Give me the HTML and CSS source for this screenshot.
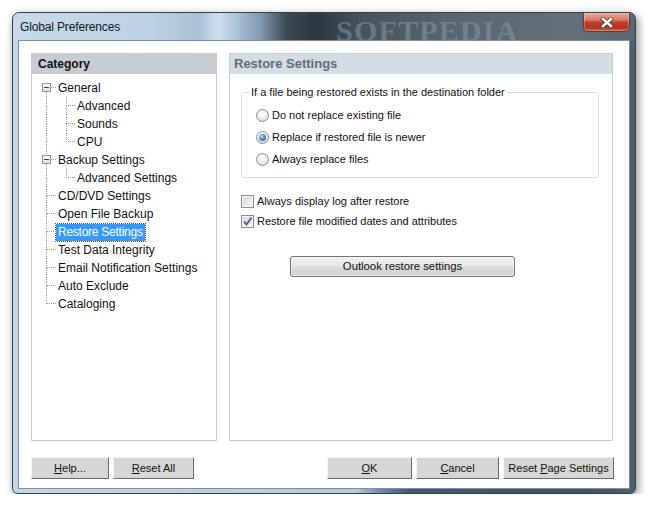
FILE: index.html
```html
<!DOCTYPE html>
<html>
<head>
<meta charset="utf-8">
<title>Global Preferences</title>
<link rel="stylesheet" href="styles.css">
</head>
<body>
<div class="window">
  <div class="titlebar">
    <span class="title">Global Preferences</span>
    <span class="watermark">SOFTPEDIA</span>
    <span class="close">
      <svg width="14" height="11" viewBox="0 0 14 11">
        <path d="M3 2 L11 9 M11 2 L3 9" stroke="#4a4a4a" stroke-width="4.2" stroke-linecap="square"/>
        <path d="M3 2 L11 9 M11 2 L3 9" stroke="#ffffff" stroke-width="2.4" stroke-linecap="square"/>
      </svg>
    </span>
  </div>
  <div class="client">
    <div class="panels">
      <div class="panel cat">
        <div class="cat-head">Category</div>
        <div class="tree">
          <div class="row"><span class="g exp"><i class="t h"></i><i class="b l"></i><b class="box"></b></span><span class="label">General</span></div>
          <div class="row"><span class="g"><i class="t l"></i><i class="b l"></i></span><span class="g c"><i class="t l h"></i><i class="b l"></i></span><span class="label">Advanced</span></div>
          <div class="row"><span class="g"><i class="t l"></i><i class="b l"></i></span><span class="g c"><i class="t l h"></i><i class="b l"></i></span><span class="label">Sounds</span></div>
          <div class="row"><span class="g"><i class="t l"></i><i class="b l"></i></span><span class="g c"><i class="t l h"></i><i class="b"></i></span><span class="label">CPU</span></div>
          <div class="row"><span class="g exp"><i class="t l h"></i><i class="b l"></i><b class="box"></b></span><span class="label">Backup Settings</span></div>
          <div class="row"><span class="g"><i class="t l"></i><i class="b l"></i></span><span class="g c"><i class="t l h"></i><i class="b"></i></span><span class="label">Advanced Settings</span></div>
          <div class="row"><span class="g"><i class="t l h"></i><i class="b l"></i></span><span class="label">CD/DVD Settings</span></div>
          <div class="row"><span class="g"><i class="t l h"></i><i class="b l"></i></span><span class="label">Open File Backup</span></div>
          <div class="row"><span class="g"><i class="t l h"></i><i class="b l"></i></span><span class="label selected">Restore Settings</span></div>
          <div class="row"><span class="g"><i class="t l h"></i><i class="b l"></i></span><span class="label">Test Data Integrity</span></div>
          <div class="row"><span class="g"><i class="t l h"></i><i class="b l"></i></span><span class="label">Email Notification Settings</span></div>
          <div class="row"><span class="g"><i class="t l h"></i><i class="b l"></i></span><span class="label">Auto Exclude</span></div>
          <div class="row"><span class="g"><i class="t l h"></i><i class="b"></i></span><span class="label">Cataloging</span></div>
        </div>
      </div>
      <div class="panel page">
        <div class="page-head">Restore Settings</div>
        <div class="page-body">
          <fieldset class="group">
            <legend>If a file being restored exists in the destination folder</legend>
            <div class="opt"><span class="radio"></span><span>Do not replace existing file</span></div>
            <div class="opt"><span class="radio on"></span><span>Replace if restored file is newer</span></div>
            <div class="opt"><span class="radio"></span><span>Always replace files</span></div>
          </fieldset>
          <div class="checks">
            <div class="chk"><span class="cbox"></span><span>Always display log after restore</span></div>
            <div class="chk"><span class="cbox on"><svg width="11" height="11" viewBox="0 0 11 11"><path d="M2 5.5 L4.5 8.5 L9.5 1.5" fill="none" stroke="#4b5e93" stroke-width="1.8"/></svg></span><span>Restore file modified dates and attributes</span></div>
          </div>
          <div class="outlook">Outlook restore settings</div>
        </div>
      </div>
    </div>
    <div class="buttons">
      <div class="btn-group">
        <span class="btn b-help"><u>H</u>elp...</span>
        <span class="btn b-reset"><u>R</u>eset All</span>
      </div>
      <div class="btn-group">
        <span class="btn b-ok"><u>O</u>K</span>
        <span class="btn b-cancel"><u>C</u>ancel</span>
        <span class="btn b-page">Reset <u>P</u>age Settings</span>
      </div>
    </div>
  </div>
</div>
</body>
</html>
```

FILE: styles.css
```css
html, body {
  margin: 0;
  padding: 0;
  background: #ffffff;
}
body {
  font-family: "Liberation Sans", Arial, sans-serif;
  color: #000;
}
.window {
  margin: 12px 0 0 12px;
  width: 624px;
  height: 482px;
  box-sizing: border-box;
  border: 1px solid #34414b;
  border-radius: 7px 7px 6px 6px;
  padding: 0 5px 4px 5px;
  box-shadow: 2px 3px 10px rgba(0,0,0,0.45);
  background:
    linear-gradient(to right, #c7d9ea 0%, #bed2e5 22%, #a9c1d7 30%, #cfe0ef 33%, #9fb7cd 37%, #7e95aa 40%, #3b4852 44%, #2b3740 49%, #47545e 56%, #5a6771 72%, #636f79 90%, #5a6670 100%) top / 100% 28px no-repeat,
    linear-gradient(to right, #c3d7ea 0%, #b4cbe0 55%, #6f8ba6 59%, #3e5870 64%, #3c5568 92%, #4d5f6c 100%);
}
.titlebar {
  height: 27px;
  display: flex;
  align-items: center;
  position: relative;
}
.title {
  font-size: 12px;
  letter-spacing: -0.15px;
  color: #101820;
  padding-left: 2px;
  margin-top: 1px;
}
.watermark {
  position: absolute;
  left: 318px;
  top: 3px;
  font-family: "Liberation Serif", serif;
  font-weight: bold;
  font-size: 30px;
  letter-spacing: 1.2px;
  color: rgba(140,155,168,0.5);
  line-height: 30px;
}
.close {
  margin-left: auto;
  align-self: flex-start;
  width: 47px;
  height: 19px;
  box-sizing: border-box;
  border: 1px solid #5b3a34;
  border-top: none;
  border-radius: 0 0 5px 5px;
  background: linear-gradient(#e6a899 0%, #d77a66 40%, #c0402a 50%, #b6321e 80%, #d0604a 100%);
  display: flex;
  align-items: center;
  justify-content: center;
  box-shadow: inset 0 0 0 1px rgba(255,255,255,0.25);
}
.client {
  width: 612px;
  height: 449px;
  box-sizing: border-box;
  background: #ffffff;
  border: 1px solid #7d8e9e;
  padding: 12px 15px 0 12px;
}
.panels {
  display: flex;
  gap: 12px;
  height: 388px;
}
.panel {
  box-sizing: border-box;
  border: 1px solid #c6ccd2;
  height: 388px;
}
.cat { width: 186px; }
.page { width: 384px; }
.cat-head {
  height: 20px;
  background: #c8ccd2;
  font-weight: bold;
  font-size: 12px;
  line-height: 21px;
  padding-left: 6px;
  color: #111;
}
.page-head {
  height: 20px;
  background: #d5dde4;
  font-weight: bold;
  font-size: 13px;
  line-height: 20px;
  padding-left: 4px;
  color: #5c6c7c;
}
.tree {
  padding: 5px 0 0 5px;
  font-size: 12px;
}
.row {
  display: flex;
  align-items: center;
  height: 18px;
}
.g {
  width: 19px;
  flex: none;
  height: 18px;
  display: flex;
  flex-direction: column;
  position: relative;
}
.g i {
  display: block;
  height: 9px;
  margin-left: 9px;
  box-sizing: border-box;
}
.g.c i { margin-left: 10px; }
.g i.l { border-left: 1px dotted #9a9a9a; }
.g i.h { border-bottom: 1px dotted #9a9a9a; }
.box {
  position: absolute;
  left: 5px;
  top: 4px;
  width: 9px;
  height: 9px;
  box-sizing: border-box;
  border: 1px solid #979797;
  background: linear-gradient(#ffffff, #dedede);
}
.box::after {
  content: "";
  position: absolute;
  left: 1px;
  top: 3px;
  width: 5px;
  height: 1px;
  background: #3a3a3a;
}
.label {
  padding: 0 2px;
  line-height: 16px;
  white-space: nowrap;
  color: #111;
}
.label.selected {
  background: #3399ff;
  color: #ffffff;
  outline: 1px dotted #6b4a1a;
  line-height: 17px;
  letter-spacing: -0.25px;
}
.page-body {
  padding: 11px 13px 0 11px;
  font-size: 11px;
  color: #111;
}
.group {
  margin: 0;
  padding: 5px 0 7px 14px;
  border: 1px solid #d3dce2;
  border-radius: 3px;
  min-width: 0;
}
.group legend {
  padding: 0 2px;
  margin-left: -7px;
  line-height: 14px;
  font-size: 11px;
}
.opt {
  display: flex;
  align-items: center;
  gap: 3px;
  height: 22px;
}
.radio {
  width: 13px;
  height: 13px;
  box-sizing: border-box;
  border-radius: 50%;
  border: 1px solid #8d8d8d;
  background: radial-gradient(circle at 45% 35%, #ffffff 0%, #f3f3f3 35%, #cfcfcf 100%);
  display: flex;
  align-items: center;
  justify-content: center;
}
.radio.on::after {
  content: "";
  width: 7px;
  height: 7px;
  border-radius: 50%;
  background: radial-gradient(circle at 40% 35%, #b9e0fb 0%, #4a8fd0 45%, #1b4f8c 100%);
}
.checks {
  margin-top: 13px;
}
.chk {
  display: flex;
  align-items: center;
  gap: 3px;
  height: 20px;
}
.cbox {
  width: 13px;
  height: 13px;
  box-sizing: border-box;
  border: 1px solid #8d8d8d;
  box-shadow: inset 0 0 0 1px #f6f6f6;
  background: linear-gradient(135deg, #d6d6d6, #f7f7f7);
  display: flex;
  align-items: center;
  justify-content: center;
}
.outlook {
  margin: 25px 0 0 49px;
  width: 225px;
  height: 21px;
  box-sizing: border-box;
  border: 1px solid #707070;
  border-radius: 3px;
  background: linear-gradient(#f0f0f0 0%, #e8e8e8 48%, #dadada 52%, #d0d0d0 100%);
  box-shadow: inset 0 0 0 1px rgba(255,255,255,0.6);
  text-align: center;
  line-height: 19px;
  font-size: 11.3px;
  color: #111;
}
.buttons {
  display: flex;
  justify-content: space-between;
  margin-top: 16px;
}
.btn-group {
  display: flex;
  gap: 4px;
}
.btn {
  height: 22px;
  box-sizing: border-box;
  background: #d6d6d6;
  border-top: 1px solid #f4f4f4;
  border-left: 1px solid #f4f4f4;
  border-right: 1px solid #6a6a6a;
  border-bottom: 1px solid #6a6a6a;
  text-align: center;
  line-height: 20px;
  font-size: 11px;
  color: #111;
}
.btn u { text-decoration: underline; }
.b-help { width: 78px; }
.b-reset { width: 81px; }
.b-ok { width: 85px; }
.b-cancel { width: 83px; }
.b-page { width: 111px; }
```
